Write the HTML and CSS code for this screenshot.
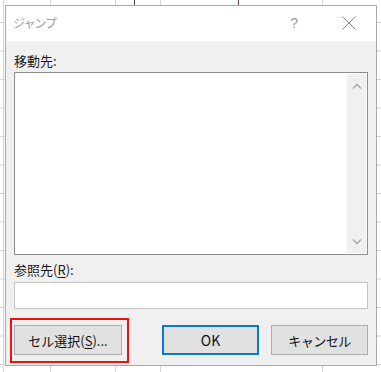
FILE: index.html
```html
<!DOCTYPE html>
<html lang="ja">
<head>
<meta charset="utf-8">
<link rel="stylesheet" href="styles.css">
</head>
<body>
<div class="screen">
  <div class="dialog">
    <div class="titlebar">
      <span class="title">ジャンプ</span>
      <span class="help">?</span>
      <svg class="close" width="14" height="14" viewBox="0 0 14 14"><path d="M0.5 0.5L13.5 13.5M13.5 0.5L0.5 13.5" stroke="#8a8a8a" stroke-width="1" fill="none"/></svg>
    </div>
    <div class="body">
      <div class="label">移動先:</div>
      <div class="listbox">
        <div class="list-area"></div>
        <div class="scrollbar">
          <svg width="10" height="6" viewBox="0 0 10 6"><path d="M1 5.5L5 1.5L9 5.5" stroke="#a6a6a6" stroke-width="1.3" fill="none"/></svg>
          <svg width="10" height="6" viewBox="0 0 10 6"><path d="M1 0.5L5 4.5L9 0.5" stroke="#a6a6a6" stroke-width="1.3" fill="none"/></svg>
        </div>
      </div>
      <div class="label label-ref">参照先(<u>R</u>):</div>
      <div class="input"></div>
      <div class="buttons">
        <button class="btn btn-select">セル選択(<u>S</u>)...</button>
        <button class="btn btn-ok">OK</button>
        <button class="btn btn-cancel">キャンセル</button>
      </div>
    </div>
  </div>
</div>
</body>
</html>
```
FILE: styles.css
```css
html, body {
  margin: 0;
  padding: 0;
  background: #ffffff;
}
.screen {
  width: 381px;
  height: 372px;
  overflow: hidden;
  background-color: #ffffff;
  background-image:
    linear-gradient(to right, transparent 3px, #d4d4d4 3px, #d4d4d4 4px, transparent 4px),
    linear-gradient(to right, transparent 50px, #d4d4d4 50px, #d4d4d4 51px, transparent 51px),
    linear-gradient(to right, transparent 115px, #d4d4d4 115px, #d4d4d4 116px, transparent 116px),
    linear-gradient(to right, transparent 134px, #404060 134px, #404060 135px, transparent 135px),
    linear-gradient(to right, transparent 160px, #d4d4d4 160px, #d4d4d4 161px, transparent 161px),
    linear-gradient(to right, transparent 238px, #604040 238px, #604040 239px, transparent 239px),
    linear-gradient(to right, transparent 322px, #d4d4d4 322px, #d4d4d4 323px, transparent 323px),
    linear-gradient(to bottom, #d4d4d4 0, #d4d4d4 1px, transparent 1px);
  background-size: 100% 100%, 100% 100%, 100% 100%, 100% 5px, 100% 100%, 100% 5px, 100% 100%, 100% 28.5px;
  background-position: 0 0, 0 0, 0 0, 0 0, 0 0, 0 0, 0 0, 0 22px;
  background-repeat: no-repeat, no-repeat, no-repeat, no-repeat, no-repeat, no-repeat, no-repeat, repeat-y;
  font-family: "Noto Sans CJK JP", "Noto Sans", sans-serif;
  padding-top: 5px;
  padding-left: 5px;
  box-sizing: border-box;
}
.dialog {
  width: 372px;
  height: 361px;
  box-sizing: border-box;
  border: 1px solid #a9a9a9;
  background: #f0f0f0;
  display: flex;
  flex-direction: column;
}
.titlebar {
  height: 35px;
  background: #ffffff;
  display: flex;
  align-items: center;
  padding-left: 7px;
  padding-right: 20px;
}
.title {
  font-size: 12px;
  letter-spacing: -1px;
  color: #9b9b9b;
  flex: 1;
  margin-top: -2px;
}
.help {
  font-size: 14px;
  color: #9b9b9b;
  margin-right: 44px;
  font-family: "Liberation Sans", sans-serif;
  margin-top: -2px;
}
.close {
  display: block;
  margin-top: -1px;
}
.body {
  flex: 1;
  padding: 12px 8px 10px 8px;
  display: flex;
  flex-direction: column;
}
.label {
  font-size: 13px;
  line-height: 16px;
  height: 16px;
  color: #1a1a1a;
}
.label u, .btn u {
  text-decoration-thickness: 1px;
  text-underline-offset: 2px;
}
.listbox {
  margin-top: 3px;
  height: 183px;
  box-sizing: border-box;
  border: 1px solid #8d8d8d;
  background: #ffffff;
  display: flex;
}
.list-area {
  flex: 1;
}
.scrollbar {
  width: 19px;
  margin: 1px 1px 1px 0;
  background: #f0f0f0;
  display: flex;
  flex-direction: column;
  justify-content: space-between;
  align-items: center;
  padding: 9px 0 8px 0;
}
.scrollbar svg {
  display: block;
}
.label-ref {
  margin-top: 7px;
}
.input {
  margin-top: 4px;
  height: 27px;
  box-sizing: border-box;
  border: 1px solid #c4c4c4;
  background: #ffffff;
}
.buttons {
  margin-top: 16px;
  display: flex;
  align-items: center;
}
.btn {
  height: 30px;
  box-sizing: border-box;
  border: 1px solid #adadad;
  background: #e1e1e1;
  font-family: "Noto Sans CJK JP", "Noto Sans", sans-serif;
  font-size: 13px;
  color: #111111;
  padding: 0;
  margin: 0;
}
.btn-select {
  width: 108px;
  position: relative;
}
.btn-select::after {
  content: "";
  position: absolute;
  top: -8px;
  left: -5px;
  right: -8px;
  bottom: -9px;
  border: 2px solid #ee1111;
}
.btn-ok {
  width: 97px;
  margin-left: auto;
  border: 2px solid #0a78d7;
  font-size: 14px;
}
.btn-cancel {
  width: 97px;
  margin-left: 12px;
  letter-spacing: -0.5px;
}
```
